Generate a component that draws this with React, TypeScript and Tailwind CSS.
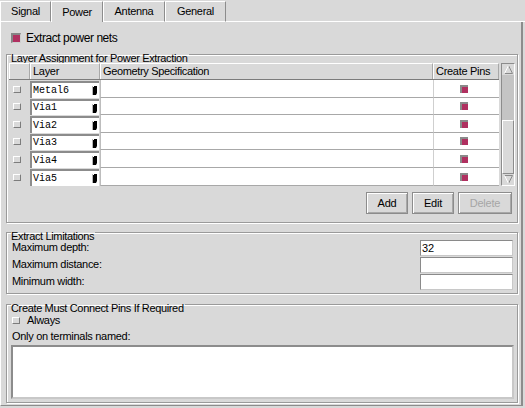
import React from "react";

const rows = [
  { name: "Metal6", h: "h-[18px]" },
  { name: "Via1", h: "h-[17px]" },
  { name: "Via2", h: "h-[18px]" },
  { name: "Via3", h: "h-[17px]" },
  { name: "Via4", h: "h-[18px]" },
  { name: "Via5", h: "h-[18px]" },
];

function Unchecked() {
  return (
    <div className="w-[8px] h-[7px] shrink-0 bg-[#d9d9d9] border border-t-white border-l-white border-r-[#7c7c7c] border-b-[#7c7c7c]" />
  );
}

function SmallChecked() {
  return (
    <div className="w-[8px] h-[8px] bg-[#b03060] border-t-2 border-l-2 border-t-[#8a8a8a] border-l-[#8a8a8a]" />
  );
}

function Arrow() {
  return (
    <svg width="5" height="9" viewBox="0 0 5 9" className="shrink-0">
      <path d="M1 0 H5 V7 L4 9 H1 Z" fill="#000" />
      <path d="M0 0 H1 V9 H0 Z" fill="#b8b8b8" />
      <path d="M1 0 H2 V1 H1 Z" fill="#ffffff" />
    </svg>
  );
}

export default function App() {
  const group =
    "w-[512px] border border-[#9a9a9a] shadow-[1px_1px_0_#fff,inset_1px_1px_0_#fff] px-[2px] min-w-0";
  const legend10 =
    "ml-[2px] pr-[1px] pt-[8px] leading-[10px] bg-transparent tracking-[-0.35px]";
  const legend8 =
    "ml-[2px] pr-[1px] pt-[8px] leading-[8px] bg-transparent tracking-[-0.35px]";
  const btn =
    "h-[22px] flex items-center justify-center bg-[#d9d9d9] border border-[#8c8c8c] shadow-[inset_1px_1px_0_#fff,inset_-1px_-1px_0_#a8a8a8] text-[11px] tracking-[-0.2px]";
  const entry =
    "h-[16px] w-[93px] bg-white border border-t-[#8a8a8a] border-l-[#8a8a8a] border-r-[#c8c8c8] border-b-[#c8c8c8] text-[11px] leading-[14px] px-[1px]";
  const hdr =
    "border-t border-l border-r border-t-white border-l-white border-r-[#a8a8a8] pl-[2px] leading-[15px]";
  return (
    <div className="w-[525px] h-[408px] overflow-hidden bg-[#d9d9d9] text-black font-['Liberation_Sans',Arial,sans-serif] text-[11px]">
      {/* Tabs */}
      <div className="flex pt-[1px] h-[22px]">
        <div className="w-[51px] h-[21px] flex items-center justify-center border-t border-l border-b border-r border-t-white border-l-white border-b-white border-r-[#8c8c8c] tracking-[-0.3px]">
          Signal
        </div>
        <div className="w-[52px] h-[21px] flex items-center justify-center border-t border-l border-r border-t-white border-l-white border-r-[#8c8c8c] tracking-[-0.3px]">
          Power
        </div>
        <div className="w-[62px] h-[21px] flex items-center justify-center border-t border-l border-b border-r border-t-white border-l-white border-b-white border-r-[#8c8c8c] tracking-[-0.3px]">
          Antenna
        </div>
        <div className="w-[61px] h-[21px] flex items-center justify-center border-t border-l border-b border-r border-t-white border-l-white border-b-white border-r-[#8c8c8c] tracking-[-0.3px]">
          General
        </div>
        <div className="flex-1 h-[21px] border-b border-b-white" />
      </div>

      {/* Page */}
      <div className="w-[523px] h-[384px] border-l border-l-white border-r-2 border-r-[#8c8c8c] border-b border-b-[#8c8c8c] pl-[5px] pt-[9px]">
        <div className="flex items-center h-[14px] pl-[5px] gap-[5px]">
          <div className="w-[10px] h-[10px] bg-[#b03060] border-t-2 border-l-2 border-r border-b border-t-[#858585] border-l-[#858585] border-r-[#cfcfcf] border-b-[#cfcfcf]" />
          <span className="text-[12px] tracking-[-0.45px]">Extract power nets</span>
        </div>

        {/* Layer Assignment */}
        <fieldset className={group + " pb-[8px]"}>
          <legend className={legend10}>Layer Assignment for Power Extraction</legend>
          <div className="flex items-start">
            <div className="w-[490px] flex flex-col">
              {/* header */}
              <div className="flex h-[17px] border-b border-b-[#7c7c7c]">
                <div className="w-[21px] border-t border-l border-r border-t-white border-l-white border-r-[#a8a8a8]" />
                <div className={hdr + " w-[70px] tracking-[-0.3px]"}>Layer</div>
                <div className={hdr + " w-[333px] tracking-[-0.35px]"}>Geometry Specification</div>
                <div className={hdr + " w-[66px] tracking-[-0.3px]"}>Create Pins</div>
              </div>
              {rows.map((r) => (
                <div key={r.name} className={"flex " + r.h}>
                  <div className="w-[21px] flex items-center pl-[4px]">
                    <Unchecked />
                  </div>
                  <div className="w-[70px] pt-[1px] pr-[1px]">
                    <div className="h-full bg-white border-t-2 border-l-2 border-t-[#8c8c8c] border-l-[#8c8c8c] flex items-center justify-between pl-[1px] pr-[2px]">
                      <span className="font-['Liberation_Mono',monospace] text-[10px] leading-[12px]">
                        {r.name}
                      </span>
                      <Arrow />
                    </div>
                  </div>
                  <div className="w-[333px] bg-white border-b border-l border-b-[#a8a8a8] border-l-[#bdbdbd]" />
                  <div className="w-[66px] bg-white border-b border-l border-b-[#a8a8a8] border-l-[#cfcfcf] flex items-center justify-center pr-[6px]">
                    <SmallChecked />
                  </div>
                </div>
              ))}
            </div>
            {/* scrollbar */}
            <div className="ml-[2px] w-[14px] h-[123px] flex flex-col bg-[#c4c4c4] border border-t-[#8c8c8c] border-l-[#8c8c8c] border-r-white border-b-white">
              <div className="h-[11px] flex items-center justify-center bg-[#d9d9d9]">
                <svg width="9" height="9" viewBox="0 0 9 9">
                  <path d="M4.5 0.5 L8.5 8.5 L0.5 8.5" stroke="#8a8a8a" strokeWidth="1" fill="none" />
                  <path d="M4.5 0.5 L0.5 8.5" stroke="#fff" strokeWidth="1" fill="none" />
                </svg>
              </div>
              <div className="flex-1" />
              <div className="h-[54px] bg-[#d9d9d9] border border-t-white border-l-white border-r-[#8c8c8c] border-b-[#8c8c8c]" />
              <div className="h-[11px] flex items-center justify-center bg-[#d9d9d9]">
                <svg width="9" height="9" viewBox="0 0 9 9">
                  <path d="M0.5 0.5 L8.5 0.5 L4.5 8.5" stroke="#8a8a8a" strokeWidth="1" fill="none" />
                  <path d="M0.5 0.5 L4.5 8.5" stroke="#fff" strokeWidth="1" fill="none" />
                </svg>
              </div>
            </div>
          </div>
          <div className="flex justify-end gap-[4px] mt-[6px] pr-[3px]">
            <div className={btn + " w-[42px]"}>Add</div>
            <div className={btn + " w-[42px]"}>Edit</div>
            <div className={btn + " w-[54px] text-[#a6a6a6]"}>Delete</div>
          </div>
        </fieldset>

        {/* Extract Limitations */}
        <fieldset className={group + " mt-[1px] pb-[2px]"}>
          <legend className={legend8}>Extract Limitations</legend>
          <div className="flex flex-col">
            <div className="flex justify-between h-[17px] pl-[3px] pr-[2px]">
              <span className="leading-[14px] tracking-[-0.3px]">Maximum depth:</span>
              <div className={entry}>32</div>
            </div>
            <div className="flex justify-between h-[17px] pl-[3px] pr-[2px]">
              <span className="leading-[14px] tracking-[-0.3px]">Maximum distance:</span>
              <div className={entry} />
            </div>
            <div className="flex justify-between h-[17px] pl-[3px] pr-[2px]">
              <span className="leading-[14px] tracking-[-0.3px]">Minimum width:</span>
              <div className={entry} />
            </div>
          </div>
        </fieldset>

        {/* Create Must Connect Pins */}
        <fieldset className={group + " mt-[1px] pb-[3px]"}>
          <legend className={legend10}>Create Must Connect Pins If Required</legend>
          <div className="flex items-center h-[14px] pl-[3px] gap-[7px]">
            <Unchecked />
            <span className="leading-[14px] tracking-[-0.3px]">Always</span>
          </div>
          <div className="mt-[2px] pl-[3px] leading-[14px] tracking-[-0.3px]">
            Only on terminals named:
          </div>
          <div className="mt-[2px] ml-[2px] w-[503px] h-[54px] bg-white border-2 border-t-[#8c8c8c] border-l-[#8c8c8c] border-r-[#c8c8c8] border-b-[#c8c8c8]" />
        </fieldset>
      </div>
    </div>
  );
}
